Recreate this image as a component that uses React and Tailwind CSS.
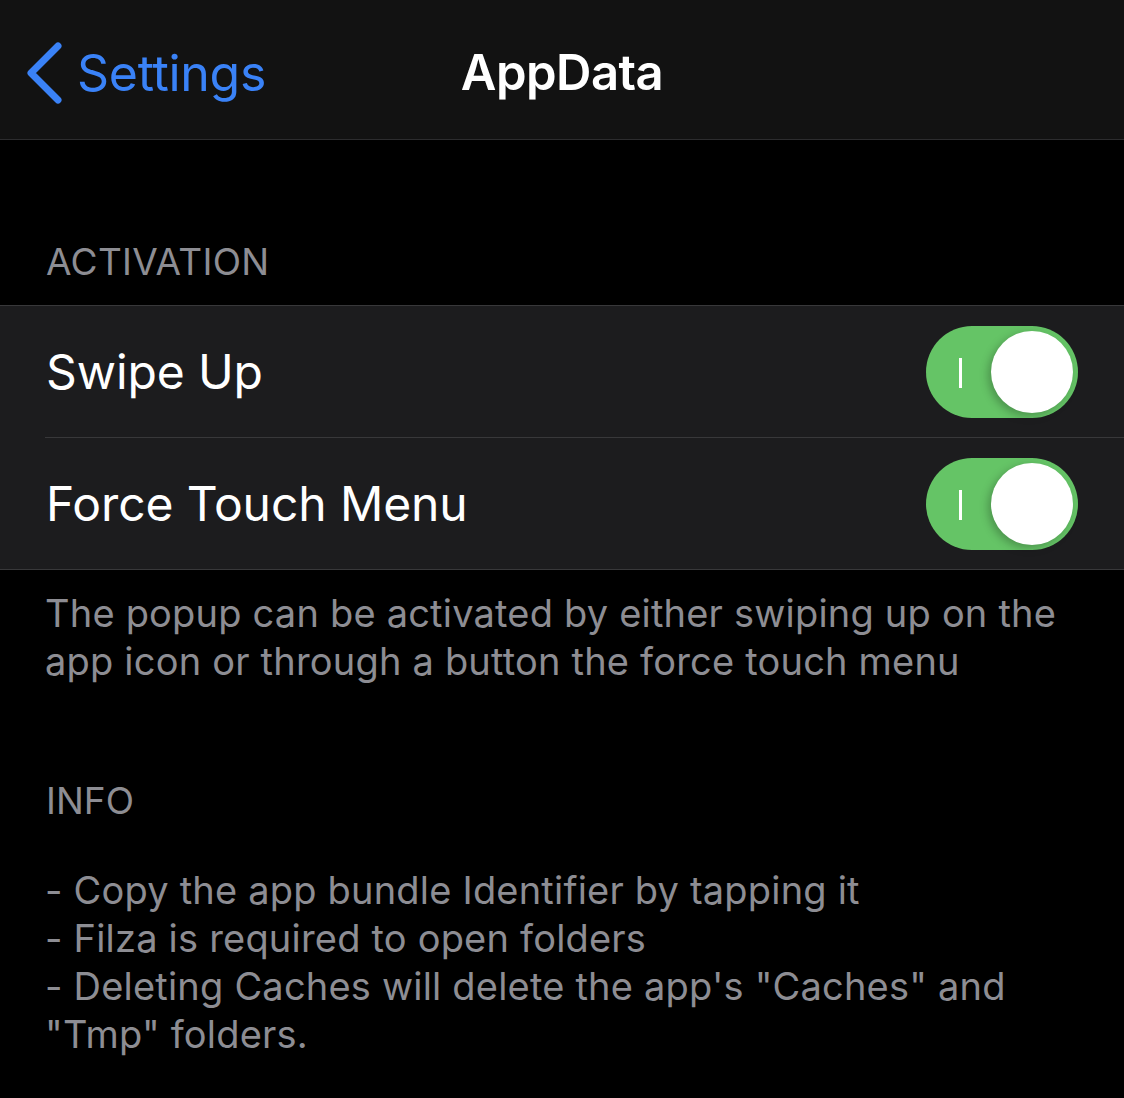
import React from 'react';

function Toggle() {
  return (
    <div className="relative w-[152px] h-[92px] rounded-full bg-[#65c466] shrink-0">
      <div className="absolute left-[33px] top-[32px] w-[3px] h-[30px] bg-white" />
      <div className="absolute right-[5px] top-[5px] w-[82px] h-[82px] rounded-full bg-white shadow-[-3px_3px_8px_rgba(0,0,0,0.25)]" />
    </div>
  );
}

export default function App() {
  return (
    <div className="w-[1124px] h-[1098px] bg-black overflow-hidden" style={{ fontFamily: 'Inter, "Noto Sans", sans-serif' }}>
      {/* Nav bar */}
      <div className="relative h-[140px] bg-[#121212] border-b border-[#2c2c2e] flex items-center pt-[6px]">
        <div className="flex items-center pl-[25px] gap-[14px]">
          <svg width="38" height="64" viewBox="0 0 38 64" fill="none">
            <path d="M33 5 L6 32 L33 59" stroke="#3a82f7" strokeWidth="7" strokeLinecap="round" strokeLinejoin="round" />
          </svg>
          <span className="text-[50px] text-[#3a82f7] leading-none tracking-[-0.3px]">Settings</span>
        </div>
        <div className="absolute left-0 right-0 top-[6px] bottom-0 flex items-center justify-center pointer-events-none">
          <span className="text-[49px] font-semibold text-white leading-none tracking-[-0.5px]">AppData</span>
        </div>
      </div>

      {/* Activation section */}
      <div className="pt-[100px]">
        <div className="px-[46px] pb-[21px] text-[37px] text-[#8d8d93] leading-[44px] tracking-[0.3px]">ACTIVATION</div>
        <div className="bg-[#1c1c1e] border-t border-b border-[#38383a]">
          <div className="h-[131px] flex items-center justify-between pl-[46px] pr-[46px]">
            <span className="text-[48px] text-white tracking-[-0.1px]">Swipe Up</span>
            <Toggle />
          </div>
          <div className="ml-[45px] border-t border-[#38383a]" />
          <div className="h-[131px] flex items-center justify-between pl-[46px] pr-[46px]">
            <span className="text-[48px] text-white tracking-[-0.1px]">Force Touch Menu</span>
            <Toggle />
          </div>
        </div>
        <div className="px-[45px] pt-[19px] text-[38px] leading-[48px] tracking-[0.2px] text-[#8d8d93]">
          The popup can be activated by either swiping up on the app icon or through a button the force touch menu
        </div>
      </div>

      {/* Info section */}
      <div className="pt-[94px]">
        <div className="px-[46px] text-[37px] text-[#8d8d93] leading-[44px]">INFO</div>
        <div className="px-[45px] pt-[43px] text-[38px] leading-[48px] tracking-[0.2px] text-[#8d8d93]">
          <div>- Copy the app bundle Identifier by tapping it</div>
          <div>- Filza is required to open folders</div>
          <div>- Deleting Caches will delete the app's "Caches" and "Tmp" folders.</div>
        </div>
      </div>
    </div>
  );
}
